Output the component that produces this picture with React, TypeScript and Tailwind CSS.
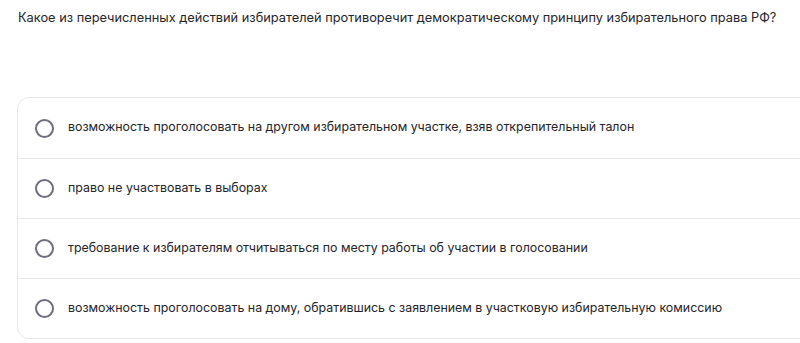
import React from "react";

const options = [
  "возможность проголосовать на другом избирательном участке, взяв открепительный талон",
  "право не участвовать в выборах",
  "требование к избирателям отчитываться по месту работы об участии в голосовании",
  "возможность проголосовать на дому, обратившись с заявлением в участковую избирательную комиссию",
];

export default function App() {
  return (
    <div
      className="w-[800px] h-[343px] overflow-hidden bg-white text-[#24242b]"
      style={{ fontFamily: "Inter, 'Noto Sans', sans-serif" }}
    >
      <div className="pl-[18px] pt-[9px] text-[12.8px] leading-[18px]">
        Какое из перечисленных действий избирателей противоречит демократическому принципу избирательного права РФ?
      </div>
      <div className="ml-[17px] mt-[70px] w-[800px] rounded-[12px] border border-[#e8e8ec] flex flex-col">
        {options.map((o, i) => (
          <div
            key={i}
            className={`flex items-center h-[60px] pl-[17px] gap-[14px] ${i > 0 ? "border-t border-[#e8e8ec]" : ""}`}
          >
            <div className="w-[19px] h-[19px] rounded-full border-2 border-[#6e6e7e] shrink-0" />
            <span className="text-[12.4px] leading-[18px] -mt-[2px]">{o}</span>
          </div>
        ))}
      </div>
    </div>
  );
}
